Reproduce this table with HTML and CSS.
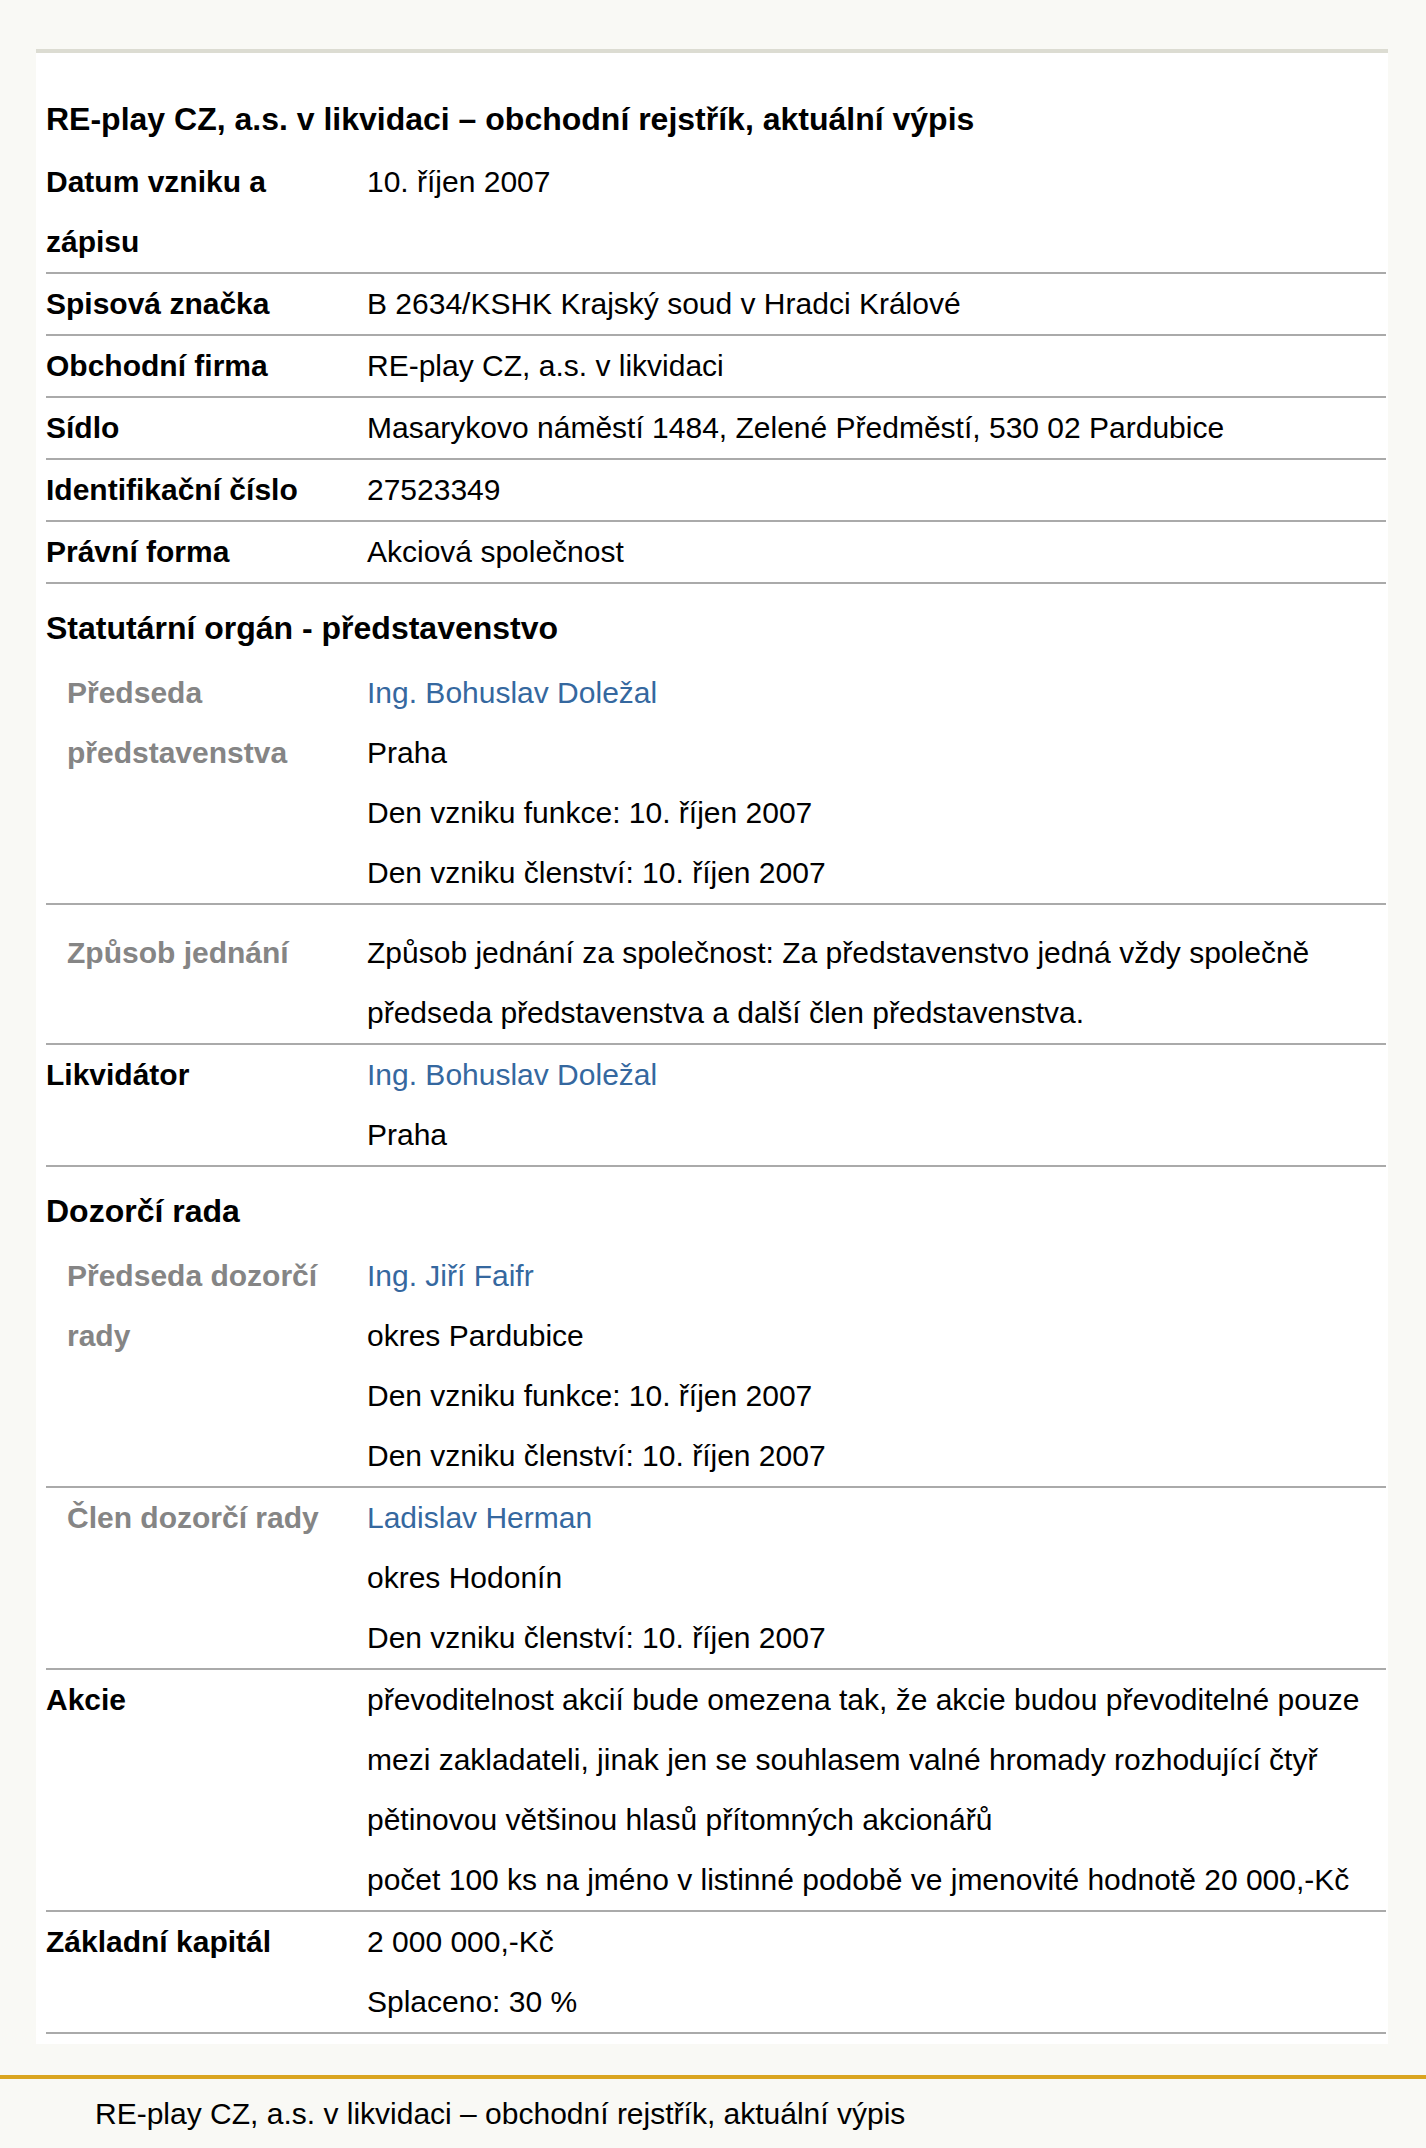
FILE: index.html
```html
<!DOCTYPE html>
<html lang="cs">
<head>
<meta charset="utf-8">
<title>RE-play CZ, a.s. v likvidaci – obchodní rejstřík, aktuální výpis</title>
<link rel="stylesheet" href="styles.css">
</head>
<body>
<main class="page">
  <section class="card">
    <h1 class="title">RE-play CZ, a.s. v likvidaci – obchodní rejstřík, aktuální výpis</h1>

    <div class="row">
      <div class="label">Datum vzniku a zápisu</div>
      <div class="value">10. říjen 2007</div>
    </div>
    <div class="row">
      <div class="label">Spisová značka</div>
      <div class="value">B 2634/KSHK Krajský soud v Hradci Králové</div>
    </div>
    <div class="row">
      <div class="label">Obchodní firma</div>
      <div class="value">RE-play CZ, a.s. v likvidaci</div>
    </div>
    <div class="row">
      <div class="label">Sídlo</div>
      <div class="value">Masarykovo náměstí 1484, Zelené Předměstí, 530 02 Pardubice</div>
    </div>
    <div class="row">
      <div class="label">Identifikační číslo</div>
      <div class="value">27523349</div>
    </div>
    <div class="row">
      <div class="label">Právní forma</div>
      <div class="value">Akciová společnost</div>
    </div>

    <h2 class="section">Statutární orgán - představenstvo</h2>
    <div class="row sub">
      <div class="label">Předseda představenstva</div>
      <div class="value">
        <div><a class="person" href="#">Ing. Bohuslav Doležal</a></div>
        <div>Praha</div>
        <div>Den vzniku funkce: 10. říjen 2007</div>
        <div>Den vzniku členství: 10. říjen 2007</div>
      </div>
    </div>
    <div class="row sub spaced">
      <div class="label">Způsob jednání</div>
      <div class="value">Způsob jednání za společnost: Za představenstvo jedná vždy společně předseda představenstva a další člen představenstva.</div>
    </div>

    <div class="row">
      <div class="label">Likvidátor</div>
      <div class="value">
        <div><a class="person" href="#">Ing. Bohuslav Doležal</a></div>
        <div>Praha</div>
      </div>
    </div>

    <h2 class="section">Dozorčí rada</h2>
    <div class="row sub">
      <div class="label">Předseda dozorčí rady</div>
      <div class="value">
        <div><a class="person" href="#">Ing. Jiří Faifr</a></div>
        <div>okres Pardubice</div>
        <div>Den vzniku funkce: 10. říjen 2007</div>
        <div>Den vzniku členství: 10. říjen 2007</div>
      </div>
    </div>
    <div class="row sub">
      <div class="label">Člen dozorčí rady</div>
      <div class="value">
        <div><a class="person" href="#">Ladislav Herman</a></div>
        <div>okres Hodonín</div>
        <div>Den vzniku členství: 10. říjen 2007</div>
      </div>
    </div>

    <div class="row">
      <div class="label">Akcie</div>
      <div class="value">
        <div>převoditelnost akcií bude omezena tak, že akcie budou převoditelné pouze mezi zakladateli, jinak jen se souhlasem valné hromady rozhodující čtyř pětinovou většinou hlasů přítomných akcionářů</div>
        <div>počet 100 ks na jméno v listinné podobě ve jmenovité hodnotě 20 000,-Kč</div>
      </div>
    </div>
    <div class="row">
      <div class="label">Základní kapitál</div>
      <div class="value">
        <div>2 000 000,-Kč</div>
        <div>Splaceno: 30 %</div>
      </div>
    </div>
  </section>
</main>
<footer class="footer">
  <p class="footer-text">RE-play CZ, a.s. v likvidaci – obchodní rejstřík, aktuální výpis</p>
</footer>
</body>
</html>
```

FILE: styles.css
```css
html, body {
  margin: 0;
  padding: 0;
}

body {
  background: #f9f9f5;
  color: #000;
  font-family: "Liberation Sans", Arial, sans-serif;
  font-size: 30px;
  line-height: 60px;
}

.page {
  padding-top: 49px;
  margin-left: 36px;
  width: 1352px;
}

.card {
  background: #fff;
  border-top: 4px solid #dcdcd2;
  padding: 36px 2px 10px 10px;
}

.title {
  margin: 0 0 3px 0;
  font-size: 32px;
  font-weight: bold;
  line-height: 60px;
}

.row {
  display: grid;
  grid-template-columns: 321px 1fr;
  border-bottom: 2px solid #aaaaaa;
}

.label {
  font-weight: bold;
  padding-right: 18px;
}

.value {
  min-width: 0;
}

.section {
  margin: 0;
  padding: 14px 0 5px 0;
  font-size: 32px;
  font-weight: bold;
  line-height: 60px;
}

.sub .label {
  color: #858585;
  padding-left: 21px;
}

.spaced {
  padding-top: 18px;
}

.person {
  color: #35689f;
  text-decoration: none;
}

.footer {
  margin-top: 31px;
  border-top: 4px solid #daa520;
}

.footer-text {
  margin: 0;
  padding: 5px 0 0 95px;
  line-height: 60px;
}
```
